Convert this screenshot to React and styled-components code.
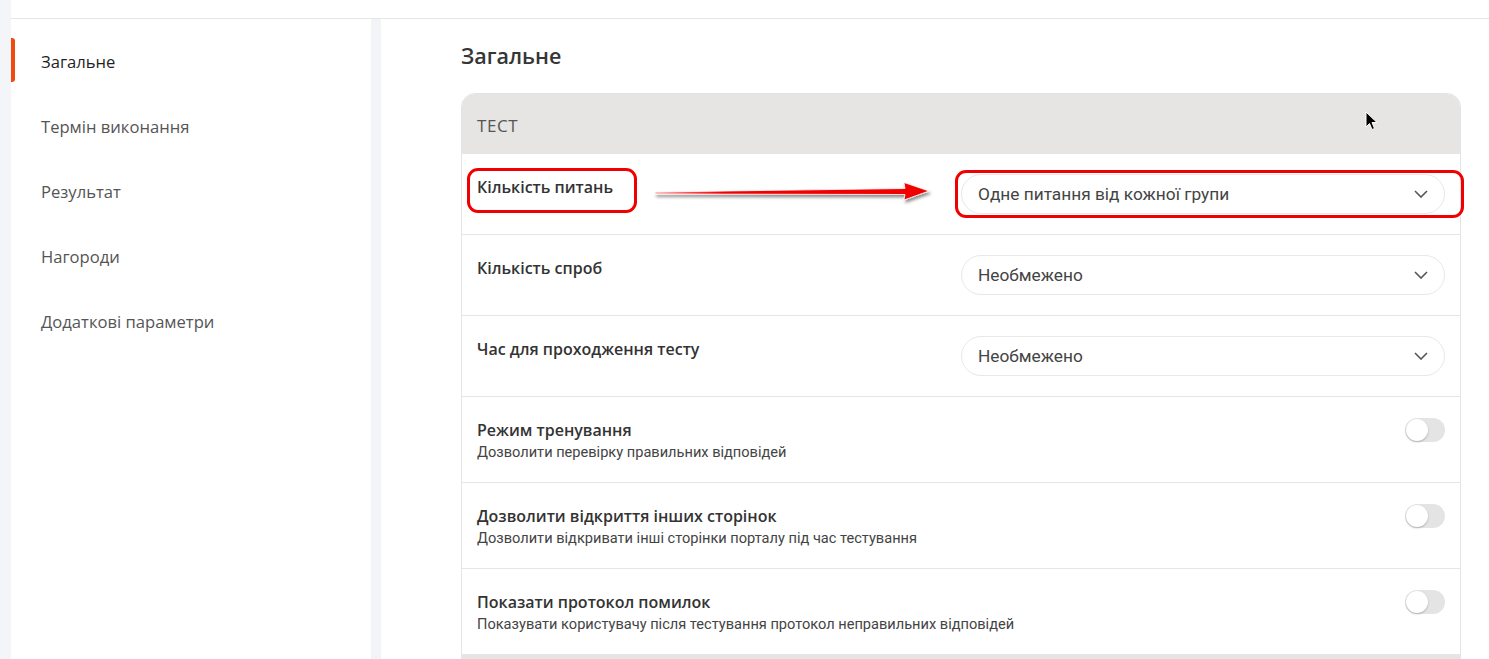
import React from "react";
import styled, { createGlobalStyle } from "styled-components";

const Global = createGlobalStyle`
  html, body { margin: 0; padding: 0; background: #ffffff; }
  body { font-family: "Open Sans", "Noto Sans", sans-serif; color: #333; overflow: hidden; }
  * { box-sizing: border-box; }
`;

const Shell = styled.div`
  display: flex;
  height: 659px;
  overflow: hidden;
`;

const LeftStrip = styled.div`
  width: 11px;
  flex: none;
  background: #f4f5f9;
`;

const Column = styled.div`
  flex: 1;
  display: flex;
  flex-direction: column;
  min-width: 0;
`;

const TopBar = styled.div`
  height: 19px;
  flex: none;
  background: #fff;
  border-bottom: 1px solid #e6e6e8;
`;

const Body = styled.div`
  flex: 1;
  display: flex;
  min-height: 0;
`;

const Sidebar = styled.nav`
  width: 360px;
  flex: none;
  padding-top: 10px;
  display: flex;
  flex-direction: column;
  background: #fff;
`;

const NavItem = styled.div`
  position: relative;
  height: 65px;
  display: flex;
  align-items: center;
  padding-left: 30px;
  font-size: 16.6px;
  color: ${(p) => (p.$active ? "#1f1f1f" : "#555")};
  &::before {
    content: "";
    display: ${(p) => (p.$active ? "block" : "none")};
    position: absolute;
    left: 0;
    top: 9px;
    width: 4px;
    height: 44px;
    border-radius: 0 3px 3px 0;
    background: #f04a0e;
  }
`;

const Gutter = styled.div`
  width: 10px;
  flex: none;
  background: #f3f4f8;
`;

const Main = styled.main`
  flex: 1;
  padding: 23px 28px 0 80px;
  min-width: 0;
`;

const Title = styled.h1`
  margin: 0 0 23px;
  font-size: 21.5px;
  line-height: 28px;
  font-weight: 600;
  color: #363636;
`;

const Card = styled.section`
  position: relative;
  border: 1px solid #e4e4e4;
  border-radius: 14px 14px 0 0;
  background: #fff;
`;

const CardHeader = styled.div`
  position: relative;
  height: 60px;
  padding: 20px 15px 0;
  background: #e6e5e3;
  border-radius: 13px 13px 0 0;
  font-size: 17px;
  line-height: 24px;
  color: #555;
  letter-spacing: 0.6px;
`;

const Row = styled.div`
  position: relative;
  display: grid;
  grid-template-columns: ${(p) => (p.$toggle ? "1fr auto" : "1fr 1fr")};
  align-items: start;
  padding: ${(p) => (p.$toggle ? "21px 15px 20px" : "20px 15px 20px")};
  border-bottom: 1px solid #e6e6e6;
`;

const LabelBox = styled.div`
  display: flex;
  flex-direction: column;
  padding-top: ${(p) => (p.$toggle ? "0" : "1px")};
`;

const Label = styled.div`
  font-size: 16px;
  line-height: 24px;
  font-weight: 600;
  color: #333;
`;

const Hint = styled.div`
  font-family: "Roboto", "Noto Sans", sans-serif;
  font-size: 14.6px;
  line-height: 20px;
  color: #444;
`;

const Select = styled.div`
  height: 40px;
  display: flex;
  align-items: center;
  justify-content: space-between;
  padding: 0 16px;
  border: 1px solid #e8e8e8;
  border-radius: 20px;
  font-family: "Roboto", "Noto Sans", sans-serif;
  font-size: 17.3px;
  color: #444;
  background: #fff;
`;

const Toggle = styled.div`
  position: relative;
  width: 40px;
  height: 24px;
  border-radius: 12px;
  background: #e4e4e4;
  &::after {
    content: "";
    position: absolute;
    left: 1px;
    top: 1px;
    width: 22px;
    height: 22px;
    border-radius: 50%;
    background: #fff;
    box-shadow: 0 1px 2px rgba(0, 0, 0, 0.25);
  }
`;

const CardFooter = styled.div`
  height: 12px;
  background: #e6e5e3;
`;

const Highlight = styled.div`
  position: absolute;
  left: ${(p) => p.$l}px;
  top: ${(p) => p.$t}px;
  width: ${(p) => p.$w}px;
  height: ${(p) => p.$h}px;
  border: 3px solid #f00000;
  border-radius: 11px;
  pointer-events: none;
`;

const ArrowSvg = styled.svg`
  position: absolute;
  left: 190px;
  top: 25px;
  overflow: visible;
`;

const CursorSvg = styled.svg`
  position: absolute;
  left: 903px;
  top: 17px;
`;

const Chevron = () => (
  <svg width="14" height="8" viewBox="0 0 14 8">
    <polyline points="1,1 7,7 13,1" fill="none" stroke="#555" strokeWidth="1.6" />
  </svg>
);

const navItems = ["Загальне", "Термін виконання", "Результат", "Нагороди", "Додаткові параметри"];

const selects = [
  { label: "Кількість питань", value: "Одне питання від кожної групи", annotate: true },
  { label: "Кількість спроб", value: "Необмежено" },
  { label: "Час для проходження тесту", value: "Необмежено" },
];

const toggles = [
  { label: "Режим тренування", hint: "Дозволити перевірку правильних відповідей" },
  { label: "Дозволити відкриття інших сторінок", hint: "Дозволити відкривати інші сторінки порталу під час тестування" },
  { label: "Показати протокол помилок", hint: "Показувати користувачу після тестування протокол неправильних відповідей" },
];

export default function App() {
  return (
    <>
      <Global />
      <Shell>
        <LeftStrip />
        <Column>
          <TopBar />
          <Body>
            <Sidebar>
              {navItems.map((n, i) => (
                <NavItem key={n} $active={i === 0}>{n}</NavItem>
              ))}
            </Sidebar>
            <Gutter />
            <Main>
              <Title>Загальне</Title>
              <Card>
                <CardHeader>
                  ТЕСТ
                  <CursorSvg width="13" height="20" viewBox="0 0 13 20">
                    <path d="M1 1 L1 16 L4.5 12.5 L7 18.5 L9.5 17.5 L7 11.5 L12 11.5 Z" fill="#000" stroke="#fff" strokeWidth="1" />
                  </CursorSvg>
                </CardHeader>
                {selects.map((s) => (
                  <Row key={s.label}>
                    <LabelBox>
                      <Label>{s.label}</Label>
                    </LabelBox>
                    <Select>
                      <span>{s.value}</span>
                      <Chevron />
                    </Select>
                    {s.annotate && (
                      <>
                        <Highlight $l={5} $t={14} $w={170} $h={45} />
                        <ArrowSvg width="282" height="28" viewBox="0 0 282 28">
                          <defs>
                            <filter id="sh" x="-10%" y="-50%" width="120%" height="200%">
                              <feDropShadow dx="1.5" dy="2.5" stdDeviation="1.5" floodColor="#000" floodOpacity="0.45" />
                            </filter>
                            <linearGradient id="ag" x1="0" x2="1" y1="0" y2="0">
                              <stop offset="0" stopColor="#ff9a9a" />
                              <stop offset="0.25" stopColor="#f00000" />
                              <stop offset="1" stopColor="#f00000" />
                            </linearGradient>
                          </defs>
                          <polygon
                            points="3,13 253,9.5 252,3.5 277,12 252,21 253,15.5 3,15"
                            fill="url(#ag)"
                            stroke="#fff"
                            strokeWidth="0.8"
                            filter="url(#sh)"
                          />
                        </ArrowSvg>
                        <Highlight $l={493} $t={16} $w={509} $h={48} />
                      </>
                    )}
                  </Row>
                ))}
                {toggles.map((t) => (
                  <Row key={t.label} $toggle>
                    <LabelBox $toggle>
                      <Label>{t.label}</Label>
                      <Hint>{t.hint}</Hint>
                    </LabelBox>
                    <Toggle />
                  </Row>
                ))}
                <CardFooter />
              </Card>
            </Main>
          </Body>
        </Column>
      </Shell>
    </>
  );
}
